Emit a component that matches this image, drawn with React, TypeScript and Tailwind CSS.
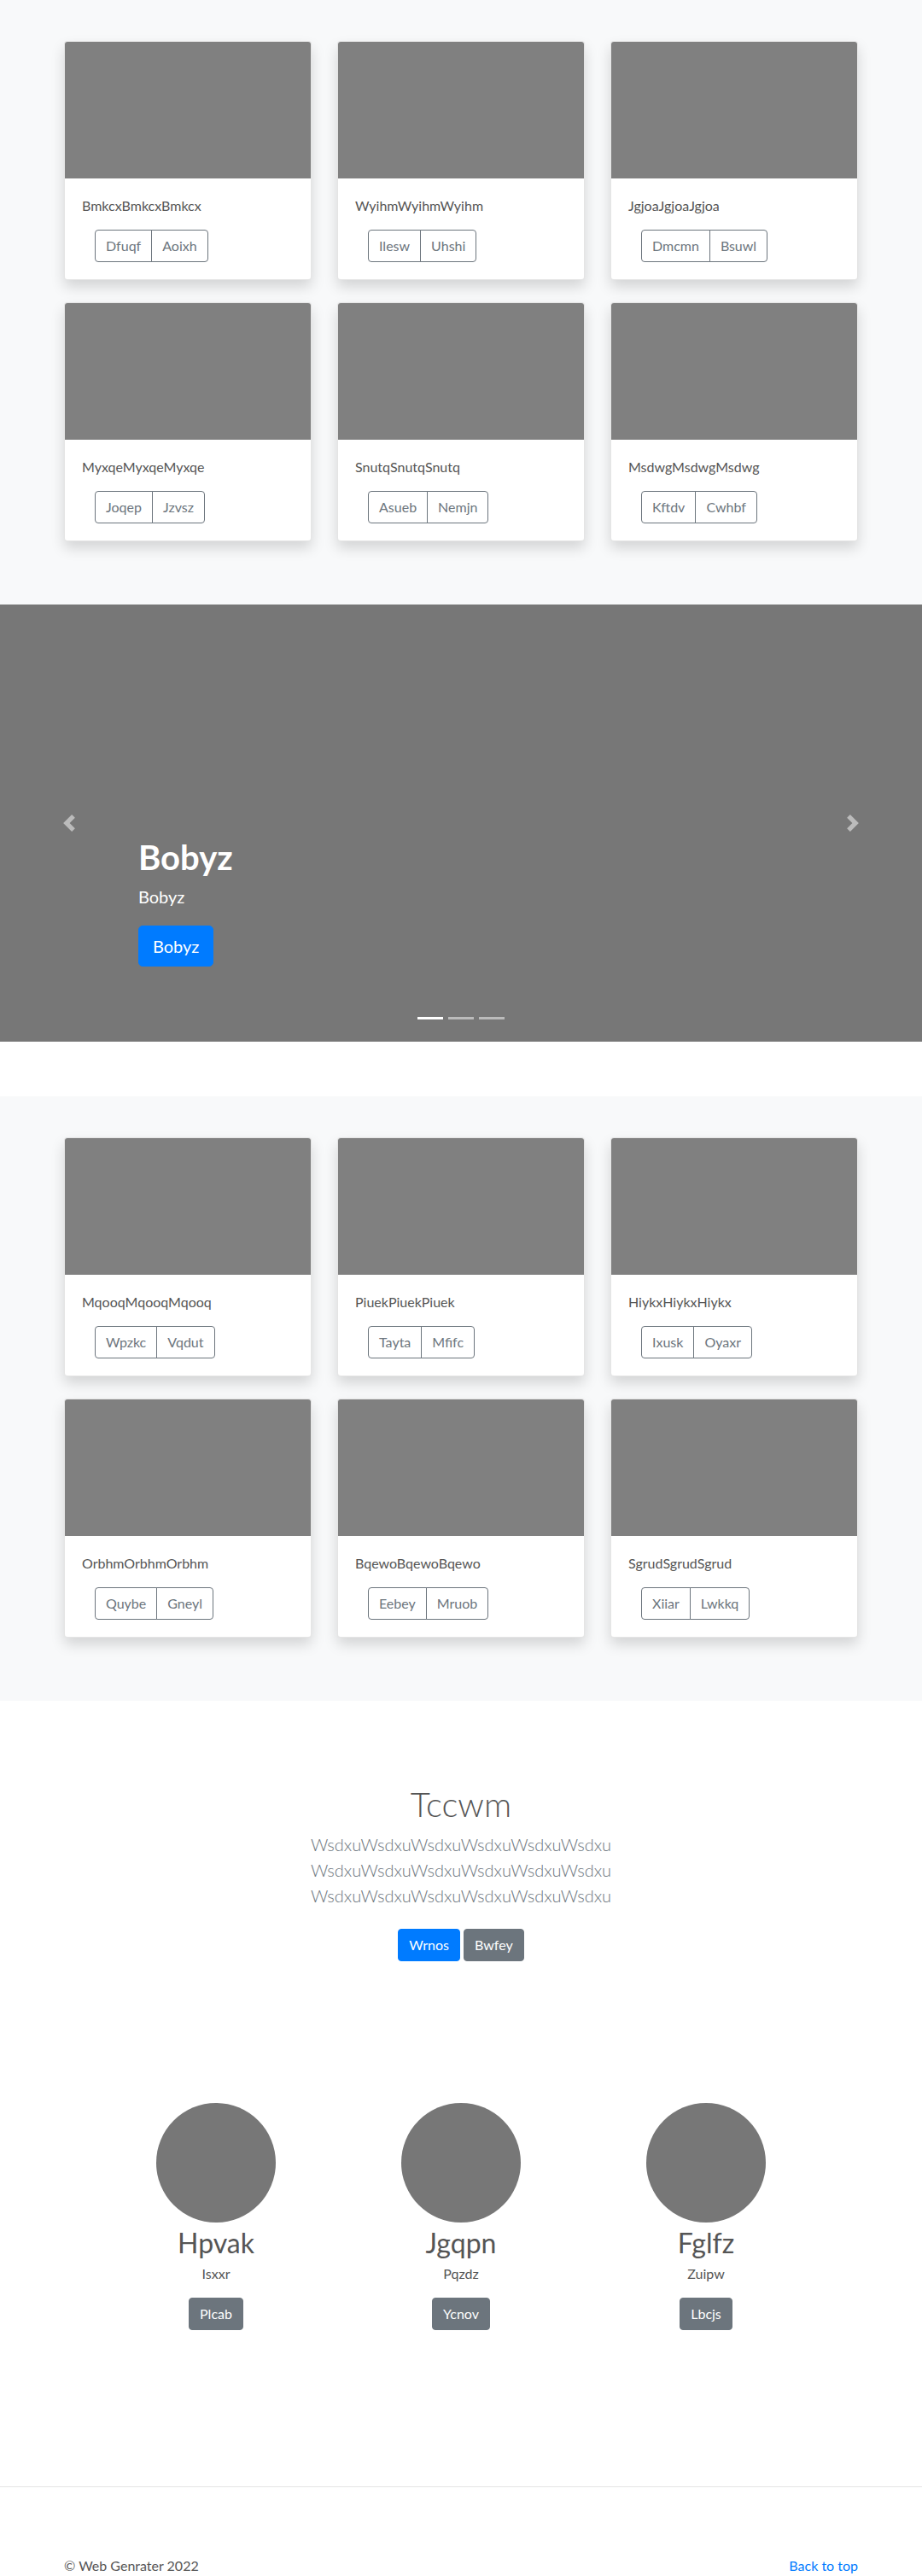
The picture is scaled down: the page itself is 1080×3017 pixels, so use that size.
import React from 'react';

const albumOne = [
  { title: 'BmkcxBmkcxBmkcx', a: 'Dfuqf', b: 'Aoixh' },
  { title: 'WyihmWyihmWyihm', a: 'Ilesw', b: 'Uhshi' },
  { title: 'JgjoaJgjoaJgjoa', a: 'Dmcmn', b: 'Bsuwl' },
  { title: 'MyxqeMyxqeMyxqe', a: 'Joqep', b: 'Jzvsz' },
  { title: 'SnutqSnutqSnutq', a: 'Asueb', b: 'Nemjn' },
  { title: 'MsdwgMsdwgMsdwg', a: 'Kftdv', b: 'Cwhbf' },
];

const albumTwo = [
  { title: 'MqooqMqooqMqooq', a: 'Wpzkc', b: 'Vqdut' },
  { title: 'PiuekPiuekPiuek', a: 'Tayta', b: 'Mfifc' },
  { title: 'HiykxHiykxHiykx', a: 'Ixusk', b: 'Oyaxr' },
  { title: 'OrbhmOrbhmOrbhm', a: 'Quybe', b: 'Gneyl' },
  { title: 'BqewoBqewoBqewo', a: 'Eebey', b: 'Mruob' },
  { title: 'SgrudSgrudSgrud', a: 'Xiiar', b: 'Lwkkq' },
];

const team = [
  { name: 'Hpvak', sub: 'Isxxr', btn: 'Plcab' },
  { name: 'Jgqpn', sub: 'Pqzdz', btn: 'Ycnov' },
  { name: 'Fglfz', sub: 'Zuipw', btn: 'Lbcjs' },
];

type CardProps = { title: string; a: string; b: string };

function AlbumCard({ title, a, b }: CardProps) {
  return (
    <div className="flex flex-col overflow-hidden rounded border border-black/10 bg-white shadow-[0_8px_16px_rgba(0,0,0,0.15)]">
      <div className="h-[160px] bg-[#808080]" />
      <div className="p-5">
        <p className="mb-4 leading-6 text-[#555]">{title}</p>
        <div className="ml-[15px] flex">
          <button className="rounded-l border border-[#6c757d] px-3 py-1.5 leading-6 text-[#6c757d]">{a}</button>
          <button className="-ml-px rounded-r border border-[#6c757d] px-3 py-1.5 leading-6 text-[#6c757d]">{b}</button>
        </div>
      </div>
    </div>
  );
}

function Album({ items }: { items: CardProps[] }) {
  return (
    <section className="bg-[#f8f9fa] pb-[74px] pt-12">
      <div className="mx-auto w-[930px]">
        <div className="grid grid-cols-3 gap-x-[30px] gap-y-[26px]">
          {items.map((c) => (
            <AlbumCard key={c.title} {...c} />
          ))}
        </div>
      </div>
    </section>
  );
}

function Carousel() {
  return (
    <div className="relative mb-16 h-[512px] bg-[#777]">
      <div className="absolute inset-y-0 left-0 flex w-[15%] items-center justify-center opacity-50">
        <svg width="20" height="20" viewBox="0 0 8 8" fill="#fff">
          <path d="M5.25 0l-4 4 4 4 1.5-1.5L4.25 4l2.5-2.5L5.25 0z" />
        </svg>
      </div>
      <div className="absolute inset-y-0 right-0 flex w-[15%] items-center justify-center opacity-50">
        <svg width="20" height="20" viewBox="0 0 8 8" fill="#fff">
          <path d="M2.75 0l-1.5 1.5L3.75 4l-2.5 2.5L2.75 8l4-4-4-4z" />
        </svg>
      </div>

      <div className="absolute bottom-12 left-[15%] right-[15%] pb-5 pt-5 text-white">
        <h1 className="mb-2 text-[40px] font-bold leading-[1.2]">Bobyz</h1>
        <p className="mb-5 text-xl leading-[1.4]">Bobyz</p>
        <div className="mb-5">
          <button className="rounded-[5px] border border-[#007bff] bg-[#007bff] px-4 py-2 text-xl leading-[1.5] text-white">
            Bobyz
          </button>
        </div>
      </div>

      <div className="absolute inset-x-0 bottom-0 mb-4 flex justify-center">
        <span className="mx-[3px] my-[10px] h-[3px] w-[30px] bg-white" />
        <span className="mx-[3px] my-[10px] h-[3px] w-[30px] bg-white/50" />
        <span className="mx-[3px] my-[10px] h-[3px] w-[30px] bg-white/50" />
      </div>
    </div>
  );
}

function Intro() {
  const line = 'WsdxuWsdxuWsdxuWsdxuWsdxuWsdxu';
  return (
    <section className="pt-[97px] text-center">
      <div className="mx-auto max-w-[640px]">
        <h1 className="mb-2 text-[40px] font-light leading-[1.2] text-[#555]">Tccwm</h1>
        <p className="mb-4 text-xl font-light leading-[1.5] text-[#6c757d]">
          {line} {line} {line}
        </p>
        <div className="flex justify-center gap-1 py-2">
          <button className="rounded border border-[#007bff] bg-[#007bff] px-3 py-1.5 leading-6 text-white">Wrnos</button>
          <button className="rounded border border-[#6c757d] bg-[#6c757d] px-3 py-1.5 leading-6 text-white">Bwfey</button>
        </div>
      </div>
    </section>
  );
}

function Team() {
  return (
    <div className="mx-auto grid w-[861px] grid-cols-3 pb-[183px] pt-[158px] text-center">
      {team.map((t) => (
        <div key={t.name} className="flex flex-col items-center">
          <div className="h-[140px] w-[140px] rounded-full bg-[#777]" />
          <h2 className="my-[5px] text-[32px] leading-[1.2] text-[#555]">{t.name}</h2>
          <p className="mb-4 leading-6 text-[#555]">{t.sub}</p>
          <button className="rounded border border-[#6c757d] bg-[#6c757d] px-3 py-1.5 leading-6 text-white">{t.btn}</button>
        </div>
      ))}
    </div>
  );
}

export default function App() {
  return (
    <div className="bg-white font-['Segoe_UI',Lato,'Helvetica_Neue',Arial,sans-serif] text-base">
      <Album items={albumOne} />
      <Carousel />
      <Album items={albumTwo} />
      <Intro />
      <Team />

      <hr className="mb-20 border-0 border-t border-black/10" />
      <footer className="mx-auto flex w-[930px] justify-between leading-6">
        <p className="text-[#555]">© Web Genrater 2022</p>
        <a href="#" className="text-[#007bff]">Back to top</a>
      </footer>
    </div>
  );
}
